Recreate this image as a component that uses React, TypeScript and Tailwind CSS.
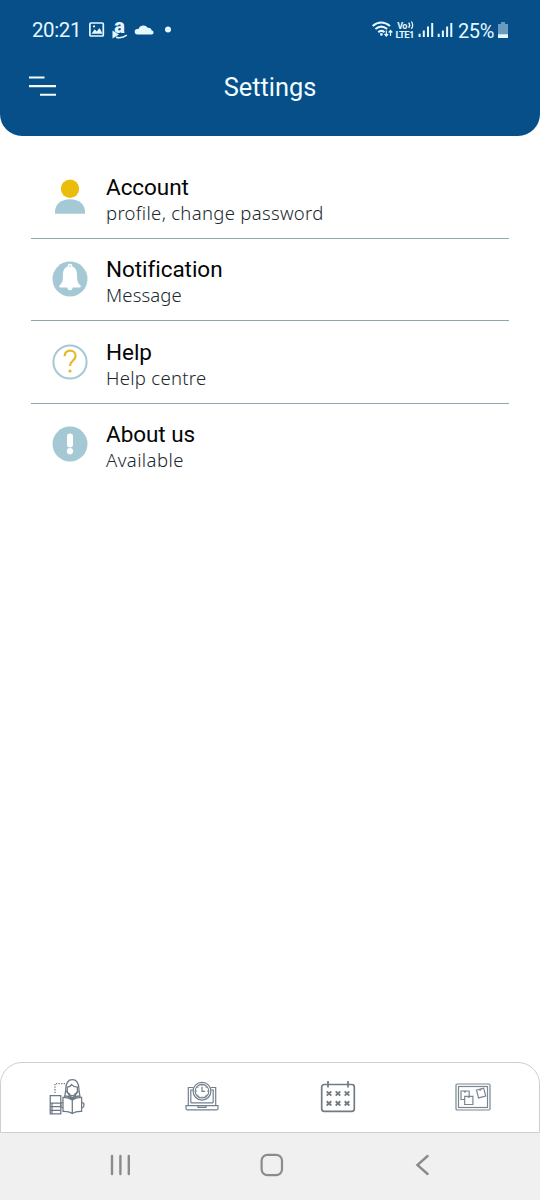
import type { ReactNode } from "react"

function StatusBar() {
  return (
    <div className="flex h-[60px] items-center pl-8 pr-[31px] text-[#e4f8ff]">
      <span className="w-[57px] text-[20.5px] leading-none tracking-[-0.4px]">20:21</span>
      <svg width="84" height="36" viewBox="0 -8 84 36" fill="currentColor">
        {/* picture */}
        <rect x="0.9" y="3" width="13.4" height="13" rx="1" fill="none" stroke="currentColor" strokeWidth="1.7" />
        <path d="M2.5 13.8 5.7 9.2l2 2.2 2.8-3.3 3 5.7z" />
        <circle cx="5" cy="6.4" r="1.1" />
        {/* shop */}
        <text x="25.3" y="13" fontSize="20" fontWeight="900">a</text>
        <path d="M23.5 10.5v8l6.5-4z" />
        <path d="M27 17.2q6 1.6 10.8-2" fill="none" stroke="currentColor" strokeWidth="1.5" />
        {/* cloud */}
        <path d="M48.5 14.4a2.7 2.7 0 0 1-.2-5.4h1.2a5.1 5.1 0 0 1 9.2-1.2 3.2 3.2 0 0 1 4 2.6 2 2 0 0 1-.2 4z" />
        <circle cx="79" cy="9.6" r="3" />
      </svg>
      <svg className="ml-auto" width="82" height="30" viewBox="0 -5 82 30" fill="none" stroke="currentColor">
        {/* wifi */}
        <path d="M.6 6q8.5-7 17.4 0M3.4 9.1q5.9-4.9 11.8 0M6.2 12.1q3.1-2.5 6.3 0" strokeWidth="2" />
        <circle cx="9.4" cy="14.4" r="1.4" fill="currentColor" stroke="none" />
        <path d="M14.3 10.5v5.3m-1.8-1.8 1.8 2 1.8-2M18.5 16v-5.3m-1.8 1.8 1.8-2 1.8 2" strokeWidth="1.2" />
        <g fill="currentColor" stroke="none" fontWeight="700">
          <text x="25.3" y="8.6" fontSize="9" textLength="10">Vo</text>
          <text x="23.5" y="18" fontSize="9.5" textLength="19">LTE1</text>
        </g>
        <path d="M36.7 2.7q2 2.5 0 5.2M39.4 1.5q2.6 3.7 0 7.4" strokeWidth="1.3" />
        {/* signal */}
        <path d="M47.6 17v-3.2M51.8 17v-6.5M56 17V6.5M60.2 17V3M66.7 17v-3.2M70.9 17v-6.5M75.1 17V6.5M79.3 17V3" strokeWidth="2" />
      </svg>
      <span className="ml-[4px] w-[39px] pt-px text-[20px] leading-none tracking-[-0.4px]">25%</span>
      <svg width="12" height="18" viewBox="0 0 12 18" fill="currentColor">
        <path d="M4 1h4v2h3v14H1V3h3z" opacity=".45" />
        <path d="M1 13.3h10V17H1z" />
      </svg>
    </div>
  )
}

function Header() {
  return (
    <header className="h-[135.5px] rounded-b-[22px] bg-[#064f88] text-[#f3fcff]">
      <StatusBar />
      <div className="grid h-[54px] grid-cols-[1fr_auto_1fr] items-center px-[29px]">
        <svg width="28" height="22" viewBox="0 0 28 22" stroke="currentColor" strokeWidth="2.1">
          <path d="M0 1.5h15.5M0 10.1h27M11 18.8h16" />
        </svg>
        <h1 className="pt-0.5 text-[25.4px] leading-none">Settings</h1>
      </div>
    </header>
  )
}

function AccountIcon() {
  return (
    <svg width="36" height="36" viewBox="0 0 36 36">
      <circle cx="18" cy="9.8" r="9.2" fill="#ebbd0b" />
      <path d="M3 34.8v-2C3 25.5 9 20.3 18 20.3s15 5.2 15 12.5v2z" fill="#a5c8d5" />
    </svg>
  )
}

function BellIcon() {
  return (
    <svg width="36" height="36" viewBox="0 0 36 36">
      <circle cx="18" cy="18" r="17.5" fill="#a5c8d5" />
      <path
        d="M18 2.8a2.3 2.3 0 0 0-2.2 2.8C12 7 11 10 11 14c0 6-.7 8-3.4 10.2-.8.8-.4 2.2.9 2.2h6.8q.5 2.9 2.7 2.9t2.7-2.9h6.8c1.3 0 1.7-1.4.9-2.2C25.7 22 25 20 25 14c0-4-1-7-4.8-8.4A2.3 2.3 0 0 0 18 2.8z"
        fill="#fff"
      />
      <circle cx="18" cy="5.1" r=".8" fill="#a5c8d5" />
    </svg>
  )
}

function HelpIcon() {
  return (
    <svg width="36" height="36" viewBox="0 0 36 36" fill="none">
      <circle cx="18" cy="18" r="16.6" stroke="#a5c8d5" strokeWidth="2" />
      <path d="M12.6 12.3c0-3.7 2.3-5.6 5.4-5.6s5.6 2 5.6 5.3c0 4.3-5.6 4.9-5.6 10" stroke="#e5b925" strokeWidth="2.2" />
      <circle cx="18" cy="27" r="1.6" fill="#e5b925" />
    </svg>
  )
}

function AboutIcon() {
  return (
    <svg width="36" height="36" viewBox="0 0 36 36">
      <circle cx="18" cy="18" r="17.5" fill="#a5c8d5" />
      <rect x="15" y="7.4" width="6" height="14.2" rx="3" fill="#fff" />
      <circle cx="18" cy="25.2" r="3.1" fill="#fff" />
    </svg>
  )
}

const items: { title: string; subtitle: string; icon: ReactNode; subClass: string }[] = [
  { title: "Account", subtitle: "profile, change password", icon: <AccountIcon />, subClass: "tracking-[0.31px]" },
  { title: "Notification", subtitle: "Message", icon: <BellIcon />, subClass: "tracking-[0.15px]" },
  { title: "Help", subtitle: "Help centre", icon: <HelpIcon />, subClass: "tracking-[0.3px]" },
  { title: "About us", subtitle: "Available", icon: <AboutIcon />, subClass: "tracking-[0.43px]" },
]

function SettingsList() {
  return (
    <main className="flex-1 px-[31px] pt-[20.5px]">
      {items.map((item) => (
        <div key={item.title} className="flex h-[82.5px] border-b border-[#91a5ac] pl-[21px] last:border-0">
          <div className="mr-[18px] pt-[22.5px]">{item.icon}</div>
          <div className="pt-[16.5px]">
            <h2 className="text-[22.5px] leading-[28px] tracking-[-0.05px] text-[#050505]">{item.title}</h2>
            <p className={`font-['Noto_Sans',sans-serif] text-[18.5px] font-light leading-[24px] text-[#20282e] ${item.subClass}`}>
              {item.subtitle}
            </p>
          </div>
        </div>
      ))}
    </main>
  )
}

function ReaderIcon() {
  return (
    <svg width="38" height="38" viewBox="0 0 38 38" fill="none" stroke="#6c7884" strokeWidth="1.25">
      <path d="M7 15V5.5h10" strokeDasharray="1.3 1.3" />
      <path d="M2.2 17.5h10.6v18.3H2.2zM2.2 25h10.6M2.2 28.7h10.6M2.2 32.3h10.6M4 25v10.8" />
      <path d="M17 20c-1-1.6.6-4 .8-9.2C18 4.6 20.7 1.5 24.3 1.5s6.4 3.1 6.6 9.3c.2 5.2 1.8 7.6.8 9.2" />
      <path d="M19.2 13V9.2q3.3-.4 4.4-2.6 1.9 2.5 5.8 2.6V13c0 2.6-2.4 4.6-5.1 4.6s-5.1-2-5.1-4.6z" />
      <path d="m18 13.3 3.8 2.9-1.6 3.2M30.6 13.3l-3.8 2.9 1.6 3.2M21.3 17.6l3 2.2 3-2.2" />
      <path d="M15 19.3q5.5-.3 9.3 2.7 3.7-3 9.3-2.7v14.2q-5.6-.3-9.3 2-3.8-2.3-9.3-2zM24.3 22v13.5M16.5 17.8q4.8 0 7.8 3 3-3 7.8-3" />
      <path d="M15 24.5c-2 0-3 1.2-2.1 2.6-.5 1.4.5 2.5 2.1 2.5M33.6 24.5c2 0 3 1.2 2.1 2.6.5 1.4-.5 2.5-2.1 2.5" />
    </svg>
  )
}

function ClassTimeIcon() {
  return (
    <svg width="34" height="32" viewBox="0 0 34 32" fill="none" stroke="#73818e" strokeWidth="1.2">
      <path d="M8.5 6.5H3.3v18h27.4v-18h-5.2M8.8 9H5.8v12.8M25.2 9h3v12.8M5.8 21.8h22.4" />
      <circle cx="17" cy="10.2" r="8.9" fill="#fff" />
      <circle cx="17" cy="10.2" r="6.8" />
      <path d="M17 5.7v4.7h3M17 3.8v1M17 15.5v1M10.8 10.2h1M22.2 10.2h1M12.6 5.8l.7.7M20.7 13.9l.7.7M12.6 14.6l.7-.7M20.7 6.5l.7-.7" />
      <path d="M1 24.7h32v2.7q0 1.5-1.5 1.5h-29Q1 28.9 1 27.4zM13 24.7v1.6h8v-1.6" />
    </svg>
  )
}

function CalendarIcon() {
  return (
    <svg width="36" height="34" viewBox="0 0 36 34" fill="none" stroke="#707b84" strokeWidth="1.7">
      <rect x="1.7" y="4.5" width="32.6" height="26.8" rx="2.5" />
      <path d="M8 1v6.5M28 1v6.5" />
      {[9, 18, 27].map((x) =>
        [13.5, 23.4].map((y) => (
          <path key={`${x}-${y}`} d={`M${x - 2.3} ${y - 2.1}l4.6 4.2m0-4.2l-4.6 4.2`} strokeWidth="1.9" />
        )),
      )}
    </svg>
  )
}

function BoardIcon() {
  return (
    <svg width="36" height="28" viewBox="0 0 36 28" fill="none" stroke="#7a8690" strokeWidth="1.2">
      <rect x="1" y="1" width="34" height="26" rx="1.2" />
      <rect x="3.5" y="3.5" width="29" height="21" />
      <path d="M9.3 16.5H6V8h8.2v5M9.7 13.3h8.2v8.2H9.7z" />
      <path d="m21.5 7 7.2-1.8 2 7.8-7.2 1.9z" />
      <path d="M9 8q1 2.3 2.2 0M12.7 13.3q1 2.2 2.2 0M24 6.4q1.4 2 2.3-.6" />
    </svg>
  )
}

function TabBar() {
  return (
    <nav className="flex h-[71px] items-center rounded-t-[22px] border border-[#cbd0d1] bg-white pb-0.5 pl-[47px]">
      <ReaderIcon />
      <div className="ml-[99px]">
        <ClassTimeIcon />
      </div>
      <div className="ml-[101px]">
        <CalendarIcon />
      </div>
      <div className="ml-[99px]">
        <BoardIcon />
      </div>
    </nav>
  )
}

function SystemBar() {
  return (
    <div className="flex h-[67px] items-center justify-between bg-[#f0f0f0] pb-[3px] pl-[108px] pr-[110px] text-[#8b8b8b]">
      <svg width="22" height="24" viewBox="0 0 22 24" fill="none" stroke="currentColor" strokeWidth="2.4" strokeLinecap="round">
        <path d="M4 3v18M12.4 3v18M20.8 3v18" />
      </svg>
      <svg width="24" height="24" viewBox="0 0 24 24" fill="none" stroke="currentColor" strokeWidth="2.2">
        <rect x="1.6" y="1.8" width="20.4" height="20.4" rx="6" />
      </svg>
      <svg width="16" height="24" viewBox="0 0 16 24" fill="none" stroke="currentColor" strokeWidth="2.4" strokeLinecap="round">
        <path d="M13.6 3 3.4 12l10.2 9" />
      </svg>
    </div>
  )
}

export default function App() {
  return (
    <div className="flex h-[1200px] w-[540px] flex-col overflow-hidden bg-white font-[Roboto,sans-serif]">
      <Header />
      <SettingsList />
      <TabBar />
      <SystemBar />
    </div>
  )
}
